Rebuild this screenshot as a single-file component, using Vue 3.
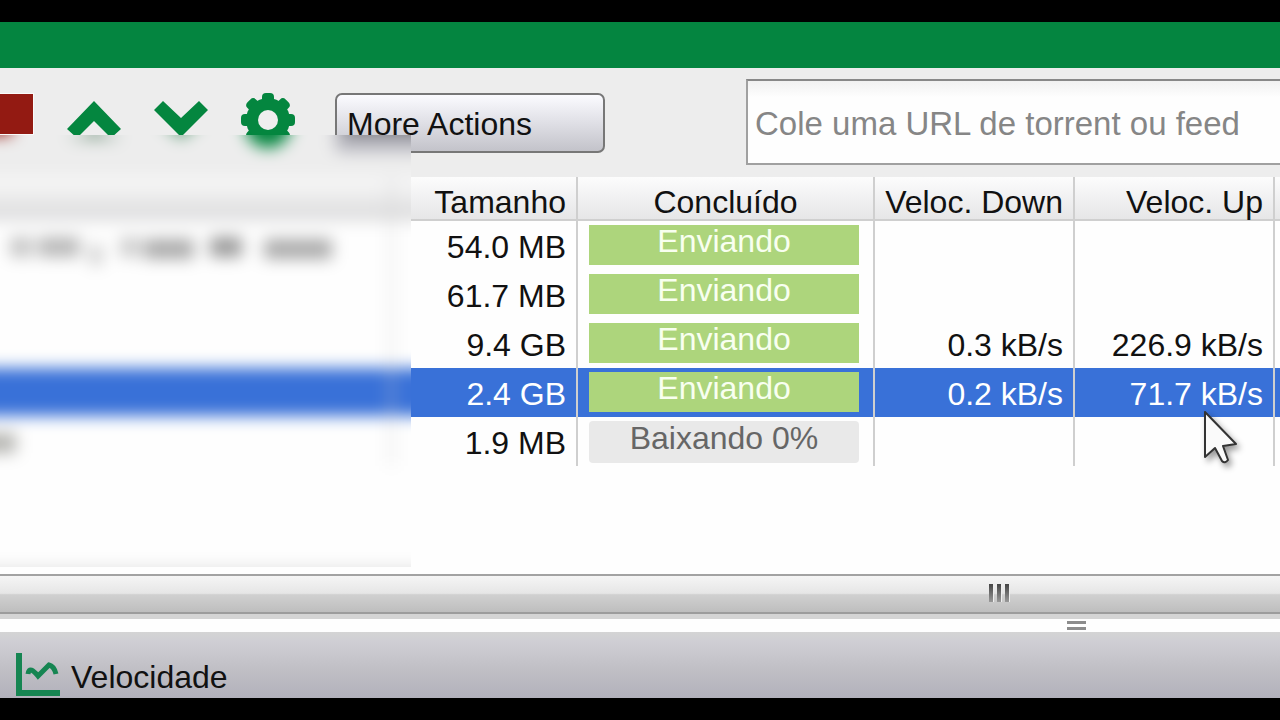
<script setup>
import { ref } from 'vue'

const url = ref('')
const action = ref('more')

const torrents = ref([
  { id: 1, size: '54.0 MB', status: 'Enviando', down: '', up: '' },
  { id: 2, size: '61.7 MB', status: 'Enviando', down: '', up: '' },
  { id: 3, size: '9.4 GB', status: 'Enviando', down: '0.3 kB/s', up: '226.9 kB/s' },
  { id: 4, size: '2.4 GB', status: 'Enviando', down: '0.2 kB/s', up: '71.7 kB/s' },
  { id: 5, size: '1.9 MB', status: 'Baixando 0%', down: '', up: '' }
])
const selectedId = ref(4)

// Blurred words of the hidden file names
const words = [
  { x: 10, y: 102, width: 22, fill: '#c4c4c4' },
  { x: 38, y: 102, width: 42, fill: '#b8b8b8' },
  { x: 90, y: 110, width: 12, fill: '#ccc' },
  { x: 120, y: 102, width: 20, fill: '#ccc' },
  { x: 144, y: 104, width: 50, fill: '#aaa' },
  { x: 210, y: 102, width: 32, fill: '#999' },
  { x: 264, y: 104, width: 68, fill: '#aaa' },
  { x: -20, y: 298, width: 36, fill: '#b4b4b0' }
]
</script>

<template>
  <div class="app">
    <header class="title-bar"></header>

    <main class="content">
      <div class="toolbar">
        <button class="stop" type="button" aria-label="Parar"></button>
        <button class="tool" type="button" aria-label="Mover para cima">
          <svg width="56" height="56" viewBox="0 0 56 56">
            <path d="M28 8 L55 36 L45 45 L28 28 L11 45 L1 36 Z" fill="#04863f" />
          </svg>
        </button>
        <button class="tool" type="button" aria-label="Mover para baixo">
          <svg width="56" height="56" viewBox="0 0 56 56">
            <path d="M10 8 L28 25 L46 8 L55 17 L28 44 L1 17 Z" fill="#04863f" />
          </svg>
        </button>
        <button class="tool" type="button" aria-label="Preferências">
          <svg width="56" height="56" viewBox="0 0 56 56">
            <g fill="#04863f">
              <rect v-for="n in 4" :key="n" x="22" y="0" width="12" height="54" rx="4"
                :transform="`rotate(${n * 45} 28 27)`" />
              <circle cx="28" cy="27" r="22" />
            </g>
            <circle cx="28" cy="27" r="10" fill="#eeeeee" />
          </svg>
        </button>

        <select v-model="action" class="actions" aria-label="More Actions">
          <option value="more">More Actions</option>
        </select>

        <input v-model="url" class="url" type="text" aria-label="URL"
          placeholder="Cole uma URL de torrent ou feed">
      </div>

      <table class="torrents">
        <colgroup>
          <col>
          <col class="col-size">
          <col class="col-status">
          <col class="col-speed">
          <col class="col-speed">
          <col class="col-rest">
        </colgroup>
        <thead>
          <tr>
            <th></th>
            <th>Tamanho</th>
            <th class="center">Concluído</th>
            <th>Veloc. Down</th>
            <th>Veloc. Up</th>
            <th></th>
          </tr>
        </thead>
        <tbody>
          <tr v-for="t in torrents" :key="t.id" :class="{ selected: t.id === selectedId }"
            @click="selectedId = t.id">
            <td></td>
            <td>{{ t.size }}</td>
            <td class="status">
              <div class="bar" :class="{ idle: t.status !== 'Enviando' }">{{ t.status }}</div>
            </td>
            <td>{{ t.down }}</td>
            <td>{{ t.up }}</td>
            <td></td>
          </tr>
        </tbody>
      </table>

      <div class="privacy">
        <svg class="frost" width="100%" height="100%">
          <defs>
            <linearGradient id="head" x1="0" y1="0" x2="0" y2="1">
              <stop offset="0" stop-color="#fafafa" />
              <stop offset="1" stop-color="#d9d9da" />
            </linearGradient>
          </defs>
          <rect x="-40" y="-40" width="130%" height="130%" fill="#fefefe" />
          <rect x="-40" y="-40" width="130%" height="82" fill="#ededed" />
          <rect x="-40" y="42" width="130%" height="44" fill="url(#head)" />
          <rect x="-40" y="-30" width="52" height="30" fill="#931a12" />
          <path d="M67 0 H90 V-12 H100 V0 H122 L112 4 H78 Z" fill="#7d9a87" />
          <path d="M160 -14 H202 L181 4 Z" fill="#5f9a77" />
          <circle cx="268" cy="-10" r="23" fill="#04863f" />
          <rect x="335" y="-30" width="130" height="47" rx="6" fill="#b8b8c0" />
          <rect x="346" y="-20" width="110" height="20" fill="#77777c" />
          <rect x="-40" y="233" width="130%" height="48" fill="#3971d8" />
          <rect x="95%" y="42" width="2" height="289" fill="#cfcfcf" />
          <rect v-for="(w, i) in words" :key="i" :x="w.x" :y="w.y" :width="w.width" height="20"
            :fill="w.fill" />
          <rect x="-40" y="100%" width="130%" height="30" fill="#e2e2e2" />
        </svg>
      </div>

      <svg class="cursor" width="44" height="60" viewBox="0 0 44 60">
        <path d="M3 2 L3 47 L13 38 L20 51 Q23 54 26 50 L21 36 L34 34 Z" fill="#fafafa"
          stroke="#333" stroke-width="2" stroke-linejoin="round" />
      </svg>
    </main>

    <div class="scrollbar">
      <div class="grip"><i></i><i></i><i></i></div>
    </div>
    <div class="splitter">
      <div class="handle"></div>
    </div>

    <footer class="tabs">
      <button class="tab" type="button">
        <svg width="44" height="44" viewBox="0 0 44 44" fill="none" stroke="#168552">
          <path d="M3 0 V40 H44" stroke-width="6" />
          <path d="M12 21 C13 14 17 17 22 23 L33 12 Q38 13 40 21" stroke-width="5" />
        </svg>
        <span>Velocidade</span>
      </button>
    </footer>
  </div>
</template>

<style>
body {
  margin: 0;
  background: #000;
}
</style>

<style scoped>
.app {
  display: flex;
  flex-direction: column;
  min-height: 100vh;
  box-sizing: border-box;
  border-top: 22px solid #000;
  border-bottom: 22px solid #000;
  background: #fefefe;
  color: #111;
  font-family: "Liberation Sans", Arial, sans-serif;
  font-size: 32px;
  overflow: hidden;
}

.title-bar {
  height: 46px;
  background: #048540;
}

.content {
  position: relative;
  flex: 1;
}

/* Toolbar */
.toolbar {
  display: flex;
  align-items: center;
  height: 109px;
  background: #ededed;
}

.stop {
  width: 34px;
  height: 42px;
  margin-right: 32px;
  margin-bottom: 18px;
  padding: 0;
  border: 1px solid #fafafa;
  border-left: none;
  background: #931a12;
}

.tool {
  width: 56px;
  height: 56px;
  margin-right: 31px;
  margin-bottom: 4px;
  padding: 0;
  border: none;
  background: none;
}

.tool svg {
  display: block;
}

.actions {
  appearance: none;
  width: 270px;
  height: 60px;
  margin-left: 8px;
  margin-right: 141px;
  padding: 3px 10px 0;
  border: 2px solid #777;
  border-radius: 7px;
  background: linear-gradient(#fbfbff, #e2e2e8 45%, #c3c3ca);
  color: #111;
  font: inherit;
}

.url {
  flex: 1;
  min-width: 0;
  height: 86px;
  box-sizing: border-box;
  margin-bottom: 2px;
  padding: 4px 0 0 7px;
  border: 2px solid #a0a0a0;
  border-top-color: #888;
  border-right: none;
  border-radius: 0;
  background: linear-gradient(#f1f1f1, #fefefe 20%);
  color: #111;
  font-family: inherit;
  font-size: 33px;
}

.url::placeholder {
  color: #868686;
  opacity: 1;
}

/* Torrent list */
.torrents {
  width: 100%;
  table-layout: fixed;
  border-collapse: separate;
  border-spacing: 0;
}

.col-size {
  width: 187px;
}

.col-status {
  width: 297px;
}

.col-speed {
  width: 200px;
}

.col-rest {
  width: 5px;
}

th,
td {
  box-sizing: border-box;
  border-right: 2px solid #cfcfcf;
  text-align: right;
  font-weight: normal;
  white-space: nowrap;
}

th:last-child,
td:last-child {
  padding: 0;
  border-right: none;
}

th {
  height: 44px;
  padding: 8px 10px 0 0;
  border-bottom: 2px solid #cfcfcf;
  background: linear-gradient(#fcfcfc, #e6e6e7);
  line-height: 34px;
}

th.center {
  padding-right: 0;
  text-align: center;
}

td {
  height: 49px;
  padding: 5px 10px 2px 0;
  line-height: 42px;
}

.selected td {
  background: #3971d8;
  color: #fff;
}

td.status {
  padding: 4px 14px 0 11px;
  vertical-align: top;
}

.bar {
  height: 40px;
  background: #add57c;
  color: #f8fff0;
  line-height: 32px;
  text-align: center;
}

.bar.idle {
  height: 42px;
  border-radius: 4px;
  background: #e9e9e9;
  color: #666;
  line-height: 35px;
}

/* Frosted pane that hides the file names */
.privacy {
  position: absolute;
  top: 67px;
  bottom: 7px;
  left: 0;
  width: calc(100% - 869px);
  overflow: hidden;
  pointer-events: none;
}

.frost {
  display: block;
  overflow: visible;
  filter: blur(8px);
}

.cursor {
  position: absolute;
  top: 342px;
  right: 34px;
  filter: drop-shadow(3px 4px 3px rgba(0, 0, 0, 0.4));
  pointer-events: none;
}

/* Bottom of the list */
.scrollbar {
  display: flex;
  align-items: center;
  justify-content: flex-end;
  height: 36px;
  padding-right: 270px;
  border-top: 2px solid #a2a2a2;
  border-bottom: 2px solid #9c9c9c;
  background: linear-gradient(#f5f5f5, #e6e6e6 48%, #d0d0d0 52%, #bebebe);
}

.grip {
  display: flex;
  gap: 3px;
  padding-bottom: 3px;
}

.grip i {
  width: 4px;
  height: 18px;
  border-right: 1px solid #eee;
  background: linear-gradient(#444, #999);
}

.splitter {
  display: flex;
  align-items: center;
  justify-content: flex-end;
  height: 13px;
  padding-right: 194px;
  border-top: 5px solid #d4d4d4;
  background: #fefefe;
}

.handle {
  width: 19px;
  height: 3px;
  border-top: 3px solid #8c8c8c;
  border-bottom: 3px solid #8c8c8c;
}

.tabs {
  height: 66px;
  background: linear-gradient(#d4d4d4, #cfced4 15%, #bfbec4 60%, #b2b1bb);
}

.tab {
  display: flex;
  align-items: center;
  gap: 11px;
  padding: 20px 16px 0;
  border: none;
  background: none;
  color: #111;
  font: inherit;
  line-height: 44px;
}

.tab span {
  padding-top: 5px;
  line-height: 40px;
}
</style>
